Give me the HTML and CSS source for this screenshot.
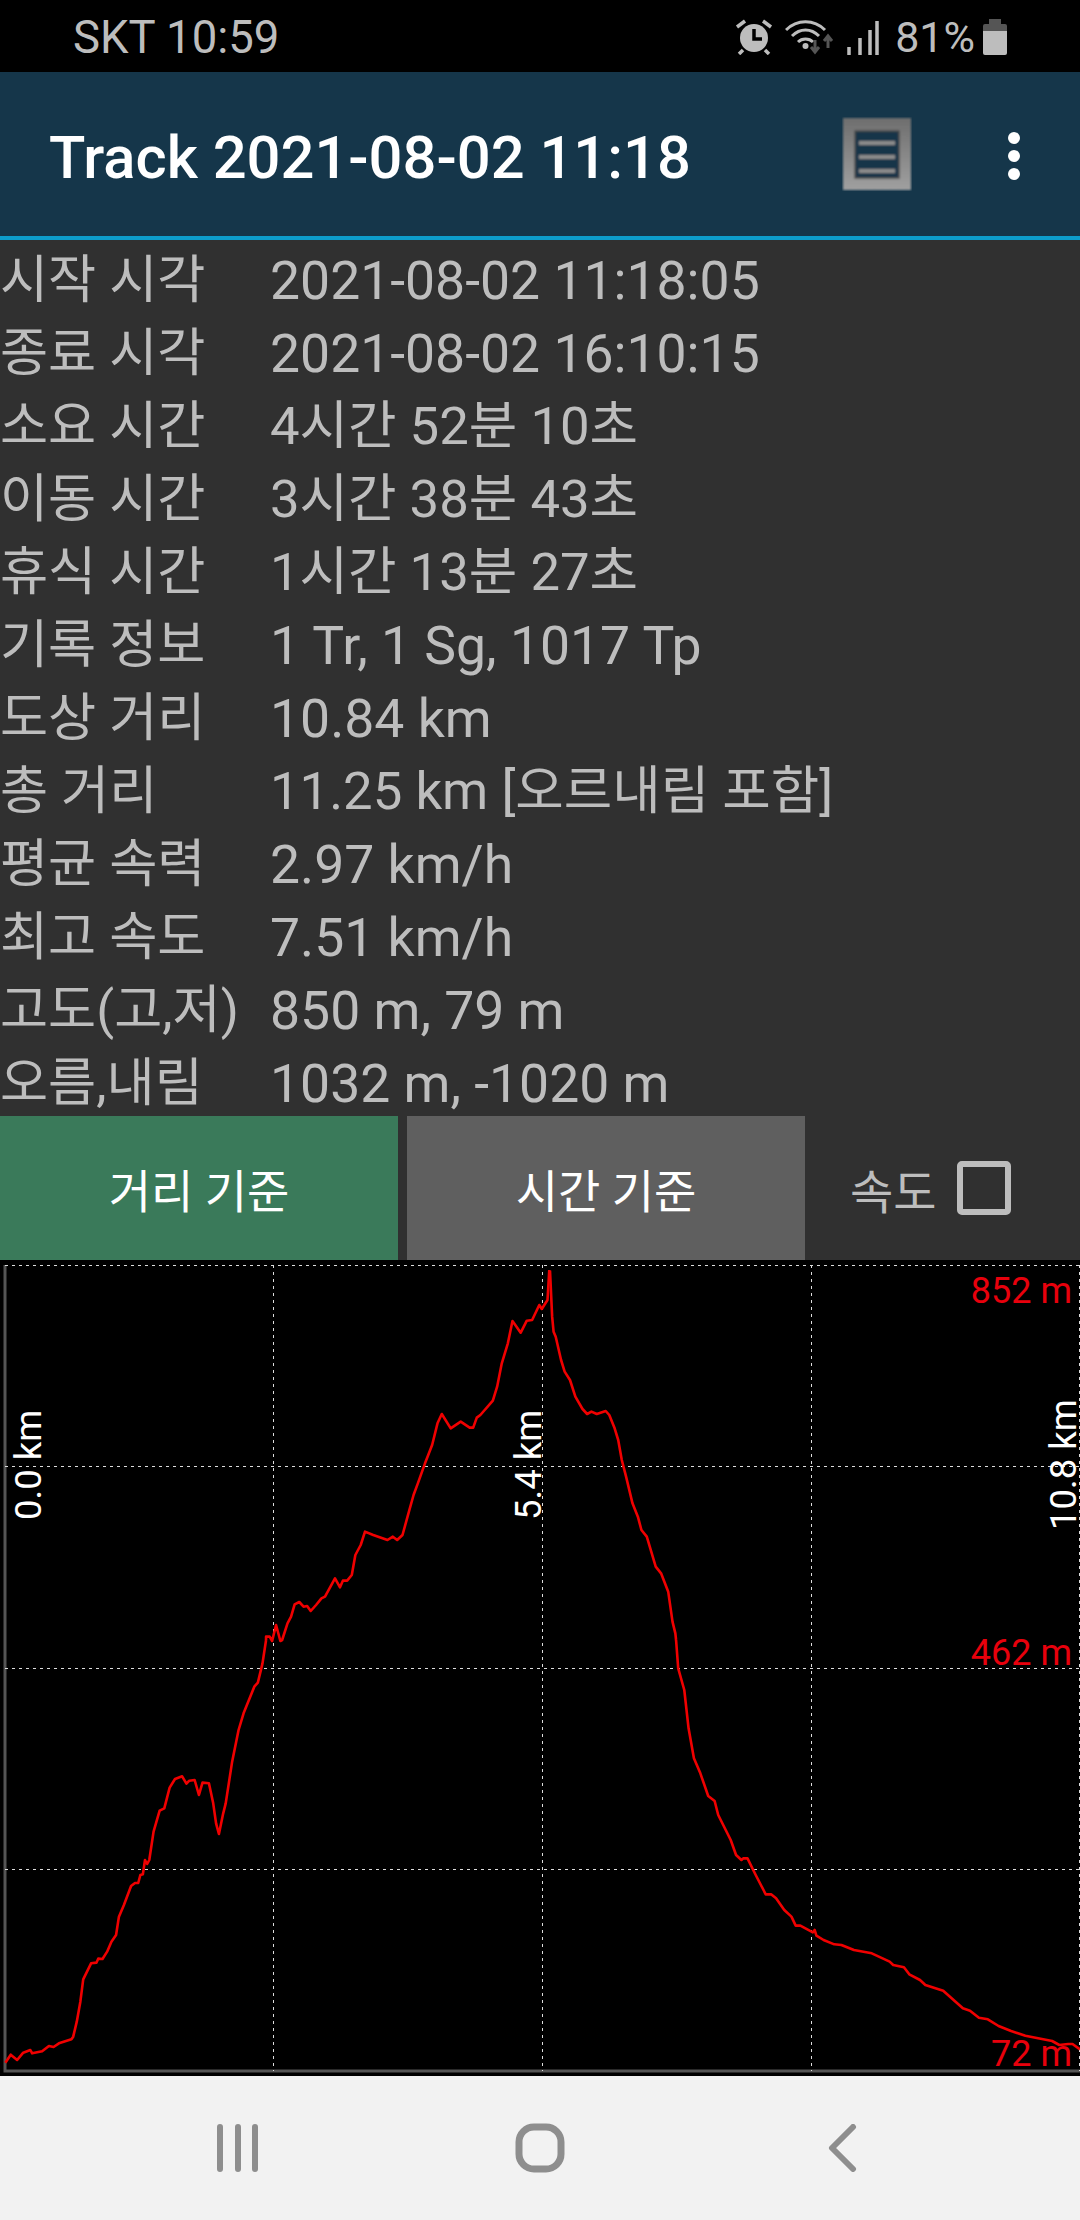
FILE: index.html
```html
<!DOCTYPE html>
<html lang="ko">
<head>
  <meta charset="UTF-8">
  <title>Track 2021-08-02 11:18</title>
  <link rel="stylesheet" href="styles.css">
</head>
<body>

  <div class="status-bar">
    <span class="carrier">SKT 10:59</span>
    <div class="status-icons">
      <svg class="ic-alarm" width="38" height="36" viewBox="0 0 38 36">
        <circle cx="19" cy="19" r="14" fill="#bdbdbd"/>
        <path d="M19 10v10h8" fill="none" stroke="#000" stroke-width="3.5"/>
        <path d="M2 8l8-6M36 8l-8-6M8 31l-4 4M30 31l4 4" stroke="#bdbdbd" stroke-width="3.5" fill="none"/>
      </svg>
      <svg class="ic-wifi" width="50" height="36" viewBox="0 0 50 36">
        <path d="M1 11C12 0 29 0 40 11M7 17C15 9 26 9 34 17M13 23c4-4 11-4 15 0" fill="none" stroke="#bdbdbd" stroke-width="3"/>
        <circle cx="20.500" cy="27" r="3" fill="#bdbdbd"/>
        <path d="M30 21v12M26 28l4 5 4-5" fill="none" stroke="#555" stroke-width="3"/>
        <path d="M43 29V17M39 22l4-5 4 5" fill="none" stroke="#555" stroke-width="3"/>
      </svg>
      <svg class="ic-signal" width="32" height="36" viewBox="0 0 32 36">
        <path d="M2 36V28M13 36V19M23 36V11M30 36V2" stroke="#bdbdbd" stroke-width="3.500"/>
      </svg>
      <span class="battery-text">81%</span>
      <svg class="ic-battery" width="24" height="36" viewBox="0 0 24 36">
        <path d="M6 0h12v5H6z" fill="#555"/>
        <path d="M2 5h20a2 2 0 0 1 2 2v5H0V7a2 2 0 0 1 2-2z" fill="#555"/>
        <path d="M0 12h24v22a2 2 0 0 1-2 2H2a2 2 0 0 1-2-2z" fill="#bdbdbd"/>
      </svg>
    </div>
  </div>

  <div class="app-bar">
    <h1 class="title">Track 2021-08-02 11:18</h1>
    <svg class="ic-list" width="70" height="74" viewBox="-1 -1 70 74">
      <defs>
        <filter id="soft"><feGaussianBlur stdDeviation="1"/></filter>
        <linearGradient id="frame" x1="0" y1="0" x2="0" y2="1">
          <stop offset="0" stop-color="#6e6e6e"/>
          <stop offset="1" stop-color="#a0a0a0"/>
        </linearGradient>
      </defs>
      <g filter="url(#soft)">
        <path d="M0 0h68v72H0z" fill="url(#frame)"/>
        <path d="M12 13h44v47H12z" fill="#15364a" stroke="#4a4a4a" stroke-width="1.500"/>
        <path d="M16 25h36M16 39h36M16 53h36" stroke="#8c8c8c" stroke-width="4"/>
      </g>
    </svg>
    <div class="overflow">
      <span class="dot"></span>
      <span class="dot"></span>
      <span class="dot"></span>
    </div>
  </div>

  <dl class="info">
    <dt>시작 시각</dt><dd>2021-08-02 11:18:05</dd>
    <dt>종료 시각</dt><dd>2021-08-02 16:10:15</dd>
    <dt>소요 시간</dt><dd class="mixed">4시간 52분 10초</dd>
    <dt>이동 시간</dt><dd class="mixed">3시간 38분 43초</dd>
    <dt>휴식 시간</dt><dd class="mixed">1시간 13분 27초</dd>
    <dt>기록 정보</dt><dd>1 Tr, 1 Sg, 1017 Tp</dd>
    <dt>도상 거리</dt><dd>10.84 km</dd>
    <dt>총 거리</dt><dd class="mixed">11.25 km [오르내림 포함]</dd>
    <dt>평균 속력</dt><dd>2.97 km/h</dd>
    <dt>최고 속도</dt><dd>7.51 km/h</dd>
    <dt>고도(고,저)</dt><dd>850 m, 79 m</dd>
    <dt>오름,내림</dt><dd>1032 m, -1020 m</dd>
  </dl>

  <div class="controls">
    <button class="btn btn-active">거리 기준</button>
    <button class="btn">시간 기준</button>
    <label class="speed">속도 <span class="checkbox"></span></label>
  </div>

  <svg class="chart" width="1080" height="816" viewBox="0 1260 1080 816">
    <!-- axis frame -->
    <path class="axis" d="M5 1265V2071H1080"/>
    <!-- grid -->
    <path class="grid" d="M5 1265.500H1080M5 1466.500H1080M5 1668.500H1080M5 1869.500H1080"/>
    <path class="grid" d="M273.500 1265V2071M542.500 1265V2071M811.500 1265V2071M1079.500 1265V2071"/>

    <!-- elevation trace, one piece per chart quarter -->
    <g transform="translate(0 1640) scale(.35714 .33333)">
      <polyline class="trace" points="15,1268 30,1244 48,1260 65,1238 85,1230 90,1240 118,1234 137,1218 150,1221 165,1210 200,1198 205,1190 215,1145 225,1085 233,1018 255,970 270,968 275,956 287,957 300,935 312,905 325,885 333,830 347,795 367,738 378,729 387,729 393,705 400,703 406,660 412,672 418,660 430,575 447,512 460,505 475,443 490,417 510,409 522,431 530,422 545,420 557,465 567,428 585,430 597,490 605,550 613,582 625,520 632,490 650,365 668,270 682,220 712,140 722,128 735,70 745,0"/>
    </g>
    <g transform="translate(0 1260) scale(.35714 .33333)">
      <polyline class="trace" points="745,1140 745,1130 755,1130 762,1143 773,1095 785,1143 790,1140 805,1090 815,1070 825,1033 838,1026 850,1040 860,1038 870,1053 885,1035 900,1015 910,1010 938,955 952,982 960,962 972,962 985,945 995,885 1010,855 1022,815 1045,825 1085,840 1100,830 1112,840 1127,825 1145,755 1158,705 1170,670 1190,610 1210,555 1225,490 1237,462 1262,505 1290,485 1315,503 1325,503 1335,473 1345,465 1380,422 1392,380 1405,310 1422,250 1435,183 1458,218 1475,182 1490,180 1510,135 1517,147 1533,120 1538,30"/>
    </g>
    <g transform="translate(520 1260) scale(.35714 .33333)">
      <polyline class="trace" points="84,32 90,170 94,215 100,230 115,300 125,335 140,360 155,410 175,447 188,462 200,455 215,462 240,453 250,465 265,505 275,540 285,600 297,650 315,730 330,770 340,810 355,830 380,920 395,940 415,995 427,1085 435,1120 437,1140"/>
    </g>
    <g transform="translate(520 1640) scale(.35714 .33333)">
      <polyline class="trace" points="437,0 443,85 460,150 472,265 487,355 505,400 527,468 545,483 555,525 590,600 605,645 620,660 625,655 637,655 660,705 688,763 703,763 717,775 740,810 760,830 772,857 785,857 820,877 825,870 830,887 850,900 880,913 900,915 935,930 985,940 1035,965 1045,975 1075,982 1090,1003 1120,1020 1135,1035 1185,1052 1240,1105 1260,1112 1285,1133 1310,1138 1340,1158 1375,1173 1415,1187 1490,1203 1510,1215 1535,1212 1547,1212 1568,1228"/>
    </g>

    <text class="alt" x="1072" y="1303">852 m</text>
    <text class="alt" x="1072" y="1665">462 m</text>
    <text class="alt" x="1072" y="2066">72 m</text>

    <text class="dist" transform="translate(41 1520) rotate(-90)">0.0 km</text>
    <text class="dist" transform="translate(541 1520) rotate(-90)">5.4 km</text>
    <text class="dist" transform="translate(1076 1530) rotate(-90)">10.8 km</text>
  </svg>

  <div class="nav-bar">
    <svg width="42" height="48" viewBox="0 0 42 48">
      <path class="nav-line" d="M3 3v42M21 3v42M38 3v42"/>
    </svg>
    <svg width="50" height="50" viewBox="0 0 50 50">
      <rect class="nav-line nav-home" x="4" y="4" width="42" height="42" rx="15"/>
    </svg>
    <svg class="nav-back" width="30" height="48" viewBox="0 0 30 48">
      <path class="nav-line" d="M25 3L4 24L25 45"/>
    </svg>
  </div>

</body>
</html>
```

FILE: styles.css
```css
* {
  box-sizing: border-box;
}

body {
  margin: 0;
  width: 1080px;
  height: 2220px;
  overflow: hidden;
  background-color: #303030;
  font-family: Roboto, "Noto Sans CJK KR", sans-serif;
  display: flex;
  flex-direction: column;
}

.status-bar {
  height: 72px;
  background-color: #000;
  color: #bdbdbd;
  font-size: 43px;
  display: flex;
  align-items: center;
  justify-content: space-between;
  padding: 2px 73px 0 73px;
}

.carrier {
  font-size: 45.5px;
}

.status-icons {
  display: flex;
  align-items: center;
  gap: 12px;
}

.battery-text {
  margin-left: 4px;
}

.ic-battery {
  margin-left: -4px;
}

.app-bar {
  height: 168px;
  background-color: #15364a;
  border-bottom: 4px solid #0d9dcc;
  display: flex;
  align-items: center;
  padding: 0 0 0 49px;
}

.title {
  flex: 1;
  margin: 0;
  padding-top: 8px;
  color: #fff;
  font-size: 59.7px;
  font-weight: 500;
}

.overflow {
  width: 62px;
  margin: 3px 35px 0 71px;
  display: flex;
  flex-direction: column;
  align-items: center;
  gap: 6px;
}

.dot {
  width: 12px;
  height: 12px;
  border-radius: 50%;
  background-color: #fff;
}

.info {
  margin: 0;
  padding-top: 4px;
  display: grid;
  grid-template-columns: 270px 1fr;
  grid-auto-rows: 73px;
  height: 876px;
  color: #bdbdbd;
  font-size: 53.5px;
  line-height: 73px;
}

.info dt,
.info dd {
  margin: 0;
  white-space: nowrap;
}

.info dt {
  font-size: 52.3px;
}

.info .mixed {
  font-size: 52.7px;
}

.controls {
  height: 144px;
  display: flex;
  gap: 9px;
}

.btn {
  width: 398px;
  height: 144px;
  border: none;
  padding: 0;
  background-color: #5f5f5f;
  color: #fff;
  font-family: inherit;
  font-size: 46px;
}

.btn-active {
  background-color: #3a7a5a;
}

.speed {
  margin-left: 36px;
  display: flex;
  align-items: center;
  gap: 21px;
  color: #bdbdbd;
  font-size: 47px;
}

.checkbox {
  width: 54px;
  height: 54px;
  border: 6px solid #bdbdbd;
  border-radius: 5px;
}

.chart {
  display: block;
  height: 816px;
  background-color: #000;
}

.axis {
  fill: none;
  stroke: #555;
  stroke-width: 3;
}

.grid {
  fill: none;
  stroke: #ddd;
  stroke-width: 1;
  stroke-dasharray: 3 4;
}

.trace {
  fill: none;
  stroke: #f00000;
  stroke-width: 2.6;
  stroke-linejoin: round;
  vector-effect: non-scaling-stroke;
}

.alt {
  fill: #e8000c;
  font-size: 36px;
  text-anchor: end;
}

.dist {
  fill: #fff;
  font-size: 36.5px;
}

.nav-bar {
  height: 144px;
  background-color: #f2f2f2;
  padding: 0 87px;
  display: grid;
  grid-template-columns: repeat(3, 1fr);
  justify-items: center;
  align-items: center;
}

.nav-line {
  fill: none;
  stroke: #8e8e8e;
  stroke-width: 6;
  stroke-linecap: round;
  stroke-linejoin: round;
}

.nav-home {
  stroke-width: 7;
}

.nav-back {
  margin-left: 2px;
}
```
